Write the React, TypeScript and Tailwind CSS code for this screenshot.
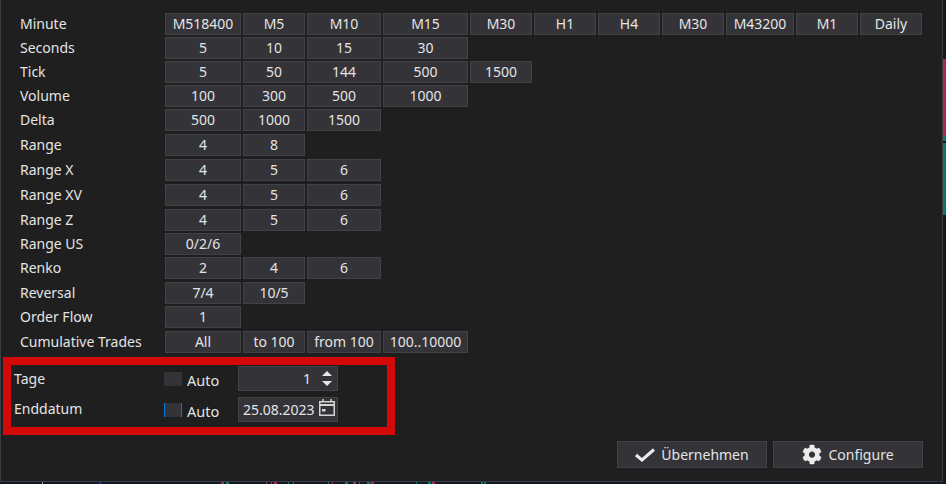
import type { ReactNode } from "react";
import { FaCog } from "react-icons/fa";

const rows: { label: string; items: string[] }[] = [
  { label: "Minute", items: ["M518400", "M5", "M10", "M15", "M30", "H1", "H4", "M30", "M43200", "M1", "Daily"] },
  { label: "Seconds", items: ["5", "10", "15", "30"] },
  { label: "Tick", items: ["5", "50", "144", "500", "1500"] },
  { label: "Volume", items: ["100", "300", "500", "1000"] },
  { label: "Delta", items: ["500", "1000", "1500"] },
  { label: "Range", items: ["4", "8"] },
  { label: "Range X", items: ["4", "5", "6"] },
  { label: "Range XV", items: ["4", "5", "6"] },
  { label: "Range Z", items: ["4", "5", "6"] },
  { label: "Range US", items: ["0/2/6"] },
  { label: "Renko", items: ["2", "4", "6"] },
  { label: "Reversal", items: ["7/4", "10/5"] },
  { label: "Order Flow", items: ["1"] },
  { label: "Cumulative Trades", items: ["All", "to 100", "from 100", "100..10000"] },
];

const candles: [number, number, string][] = [
  [42, 1, "#8a93a8"], [100, 1, "#2a4fb0"], [221, 3, "#a82a4a"], [226, 3, "#0b7768"], [266, 1, "#a82a4a"],
  [271, 1, "#0b7768"], [274, 3, "#a82a4a"], [288, 1, "#0b7768"], [293, 1, "#a82a4a"], [328, 1, "#0b7768"],
  [332, 1, "#a82a4a"], [345, 3, "#0b7768"], [353, 3, "#a82a4a"], [359, 1, "#a82a4a"], [367, 3, "#0b7768"],
  [371, 3, "#a82a4a"], [416, 1, "#0b7768"], [428, 3, "#0b7768"], [432, 3, "#a82a4a"], [481, 2, "#0b7768"], [484, 2, "#0b7768"],
];

function CheckBox({ focused }: { focused?: boolean }) {
  return <div className={`w-[18px] h-[14px] bg-[#333338] ${focused ? "border-x border-[#0078d4]" : ""}`} />;
}

function ActionButton({ children }: { children: ReactNode }) {
  return (
    <button className="w-[150px] h-[27px] flex items-center justify-center gap-[6px] bg-[#333338] border border-[#414146] text-[#e4e4e4] text-[14px] leading-none">
      {children}
    </button>
  );
}

function AutoField({ focused }: { focused?: boolean }) {
  return (
    <div className="flex items-center gap-[5px]">
      <CheckBox focused={focused} />
      <span className="text-[14.5px] text-[#e4e4e4] leading-none mt-[3px]">Auto</span>
    </div>
  );
}

export default function App() {
  return (
    <div className="w-[946px] h-[484px] overflow-hidden flex flex-col bg-[#131722] font-['Noto_Sans',sans-serif]">
      <div className="flex h-[482px]">
        <div className="w-[943px] h-[482px] flex flex-col bg-[#1f1f1f] border-x border-b border-[#3b3d46] shrink-0">
          <div className="grid grid-rows-[24px_24px_24px_24px_25px_25px_25px_25px_24px_24px_25px_24px_25px_22px] grid-cols-[143px_76px_62px_74px_85px_62px_62px_62px_62px_68px_62px_62px] gap-x-[2px] mt-[13px] pl-[19px]">
            {rows.map((r) => (
              <div key={r.label} className="contents">
                <div className="h-[22px] flex items-center text-[14px] text-[#e4e4e4] leading-none whitespace-nowrap">
                  {r.label}
                </div>
                {r.items.map((it, j) => (
                  <button
                    key={j}
                    className="h-[22px] flex items-center justify-center bg-[#333338] border border-[#414146] text-[14px] text-[#e4e4e4] leading-none whitespace-nowrap"
                  >
                    {it}
                  </button>
                ))}
                {Array.from({ length: 11 - r.items.length }).map((_, k) => (
                  <div key={k} />
                ))}
              </div>
            ))}
          </div>

          <div className="w-[392px] h-[78px] mt-[4px] ml-[2px] border-8 border-[#d40808] pl-[3px] pt-[1px] flex flex-col gap-[6px]">
            <div className="grid grid-cols-[150px_74px_100px] h-[25px] items-center">
              <span className="text-[14px] text-[#e4e4e4] leading-none">Tage</span>
              <AutoField />
              <div className="h-[25px] flex items-center justify-end gap-[10px] pr-[4px] bg-[#333338] border border-[#414146] text-[14px] text-[#e4e4e4] leading-none">
                <span>1</span>
                <svg width="12" height="17" viewBox="0 0 12 17" fill="#e6e6e6">
                  <path d="M6 1 L11 6 H1 Z" />
                  <path d="M6 16 L11 11 H1 Z" />
                </svg>
              </div>
            </div>
            <div className="grid grid-cols-[150px_74px_100px] h-[25px] items-center">
              <span className="text-[14px] text-[#e4e4e4] leading-none -mt-[2px]">Enddatum</span>
              <AutoField focused />
              <div className="h-[25px] flex items-center justify-between pl-[4px] pr-[2px] bg-[#333338] border border-[#414146] text-[14px] text-[#e4e4e4] leading-none whitespace-nowrap">
                <span>25.08.2023</span>
                <svg width="16" height="18" viewBox="0 0 16 18" fill="none" stroke="#d2d2d2" className="-mt-[3px]">
                  <rect x="0.75" y="2.75" width="14.5" height="13.5" strokeWidth="1.5" />
                  <path d="M1 6 H15" strokeWidth="2" />
                  <path d="M4 0 V3 M12 0 V3" strokeWidth="1.5" />
                  <rect x="3" y="10" width="3.5" height="2.5" fill="#d2d2d2" stroke="none" />
                </svg>
              </div>
            </div>
          </div>

          <div className="flex justify-end gap-[6px] mt-[6px] pr-[19px]">
            <ActionButton>
              <svg width="20" height="14" viewBox="0 0 20 14" fill="none" stroke="#ececec" strokeWidth="3">
                <path d="M1 7 L7 12 L19 1.5" />
              </svg>
              Übernehmen
            </ActionButton>
            <ActionButton>
              <FaCog className="w-[20px] h-[21px] text-[#ececec]" />
              Configure
            </ActionButton>
          </div>
        </div>

        <svg width="3" height="482" viewBox="0 0 3 482" className="shrink-0">
          <rect x="0" y="59" width="3" height="77" fill="#a82a4a" />
          <rect x="0" y="136" width="3" height="5" fill="#0b7768" />
          <rect x="0" y="143" width="3" height="72" fill="#0b7768" />
        </svg>
      </div>
      <svg width="946" height="2" viewBox="0 0 946 2" className="shrink-0">
        {candles.map(([x, w, c]) => (
          <rect key={x} x={x} y="0" width={w} height="2" fill={c} />
        ))}
      </svg>
    </div>
  );
}
